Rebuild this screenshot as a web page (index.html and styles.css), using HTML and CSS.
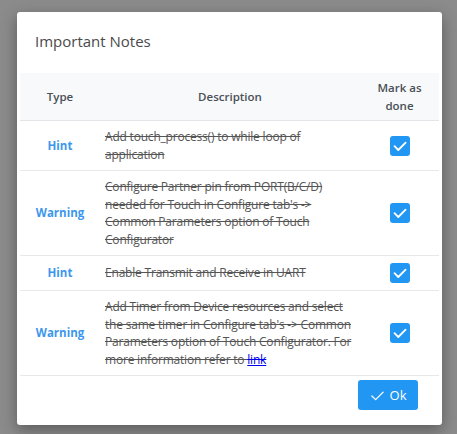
FILE: index.html
```html
<!DOCTYPE html>
<html>
<head>
<meta charset="utf-8">
<link rel="stylesheet" href="styles.css">
</head>
<body>
<div class="dialog">
  <div class="title">Important Notes</div>
  <table class="notes">
    <colgroup><col class="c-type"><col class="c-desc"><col class="c-mark"></colgroup>
    <thead>
      <tr><th>Type</th><th>Description</th><th>Mark as<br>done</th></tr>
    </thead>
    <tbody>
      <tr>
        <td class="type">Hint</td>
        <td class="desc">Add touch_process() to while loop of application</td>
        <td class="mark"><span class="check"><svg viewBox="0 0 20 20" width="20" height="20"><path d="M4.5 10.2 L8.3 14 L15.6 6.6" fill="none" stroke="#fff" stroke-width="1.8" stroke-linecap="round" stroke-linejoin="round"/></svg></span></td>
      </tr>
      <tr>
        <td class="type">Warning</td>
        <td class="desc">Configure Partner pin from PORT(B/C/D) needed for Touch in Configure tab's -&gt; Common Parameters option of Touch Configurator</td>
        <td class="mark"><span class="check"><svg viewBox="0 0 20 20" width="20" height="20"><path d="M4.5 10.2 L8.3 14 L15.6 6.6" fill="none" stroke="#fff" stroke-width="1.8" stroke-linecap="round" stroke-linejoin="round"/></svg></span></td>
      </tr>
      <tr>
        <td class="type">Hint</td>
        <td class="desc">Enable Transmit and Receive in UART</td>
        <td class="mark"><span class="check"><svg viewBox="0 0 20 20" width="20" height="20"><path d="M4.5 10.2 L8.3 14 L15.6 6.6" fill="none" stroke="#fff" stroke-width="1.8" stroke-linecap="round" stroke-linejoin="round"/></svg></span></td>
      </tr>
      <tr>
        <td class="type">Warning</td>
        <td class="desc">Add Timer from Device resources and select the same timer in Configure tab's -&gt; Common Parameters option of Touch Configurator. For more information refer to <a href="#">link</a></td>
        <td class="mark"><span class="check"><svg viewBox="0 0 20 20" width="20" height="20"><path d="M4.5 10.2 L8.3 14 L15.6 6.6" fill="none" stroke="#fff" stroke-width="1.8" stroke-linecap="round" stroke-linejoin="round"/></svg></span></td>
      </tr>
    </tbody>
  </table>
  <div class="footer">
    <button class="ok"><svg viewBox="0 0 16 16" width="15" height="15"><path d="M2 8.6 L6 12.4 L14 4.4" fill="none" stroke="#fff" stroke-width="1.4" stroke-linecap="round" stroke-linejoin="round"/></svg><span>Ok</span></button>
  </div>
</div>
</body>
</html>
```
FILE: styles.css
```css
html, body {
  margin: 0;
  padding: 0;
  background: #8b8b8b;
  height: 100%;
}
body {
  padding: 12px 15px 0 17px;
  box-sizing: border-box;
  font-family: "Open Sans", "Noto Sans", sans-serif;
  color: #495057;
}
.dialog {
  width: 425px;
  height: 413px;
  background: #fff;
  border-radius: 3px;
  box-shadow: 0 5px 15px rgba(0,0,0,0.35);
  display: flex;
  flex-direction: column;
  box-sizing: border-box;
}
.title {
  font-size: 15px;
  line-height: 20px;
  padding: 19px 18px 22px 18px;
  color: #4a4a4a;
}
.notes {
  margin: 0 3px;
  width: 419px;
  border-collapse: collapse;
  table-layout: fixed;
  font-size: 12px;
}
.c-type { width: 80px; }
.c-desc { width: 260px; }
.c-mark { width: 79px; }
.notes th {
  background: #f8f9fa;
  font-weight: 600;
  font-size: 11.5px;
  line-height: 17.5px;
  padding: 6px 5px;
  color: #495057;
  border-bottom: 1px solid #e3e5e8;
}
.notes td {
  padding: 7px 5px;
  line-height: 17.5px;
  border-bottom: 1px solid #e6e8ea;
  vertical-align: middle;
}
.notes td.type {
  text-align: center;
  font-weight: 700;
  font-size: 11.5px;
  color: #3c97ec;
}
.notes td.desc {
  padding-right: 2px;
  text-decoration: line-through;
  color: #555;
  letter-spacing: -0.2px;
}
.notes td.desc a {
  color: #0000ee;
  text-decoration: underline line-through;
}
.notes td.mark {
  text-align: center;
}
.check {
  display: inline-block;
  width: 20px;
  height: 20px;
  background: #2196f3;
  border-radius: 3px;
  vertical-align: middle;
}
.check svg { display: block; }
.footer {
  display: flex;
  justify-content: flex-end;
  padding: 4px 24px 0 0;
}
.ok {
  width: 60px;
  height: 30px;
  background: #2196f3;
  border: none;
  border-radius: 3px;
  color: #fff;
  font-family: "Open Sans", "Noto Sans", sans-serif;
  font-size: 13px;
  display: flex;
  align-items: center;
  justify-content: center;
  gap: 5px;
  padding: 0;
}
.ok svg { display: block; }
```
